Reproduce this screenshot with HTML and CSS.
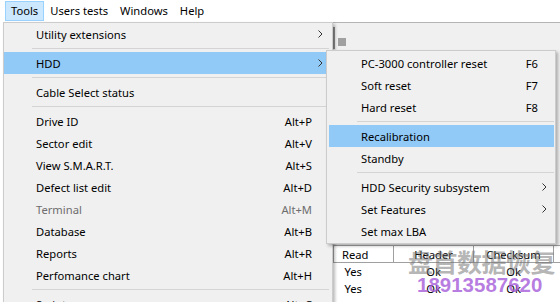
FILE: index.html
```html
<!DOCTYPE html>
<html>
<head>
<meta charset="utf-8">
<link rel="stylesheet" href="styles.css">
</head>
<body>
<div class="menubar">
  <span class="mb-item active">Tools</span>
  <span class="mb-item">Users tests</span>
  <span class="mb-item">Windows</span>
  <span class="mb-item">Help</span>
</div>
<div class="app">
  <div class="left-pane"></div>
  <div class="right-pane">
    <div class="toolbar"><span class="grip"></span><span class="tool-icon"></span></div>
    <table class="grid">
      <colgroup><col class="c1"><col class="c2"><col class="c3"><col></colgroup>
      <thead><tr><th class="left">Read</th><th>Header</th><th>Checksum</th><th></th></tr></thead>
      <tbody>
        <tr><td class="left">Yes</td><td>Ok</td><td>Ok</td><td></td></tr>
        <tr><td class="left">Yes</td><td>Ok</td><td>Ok</td><td></td></tr>
        <tr><td class="left">No</td><td>Ok</td><td>Ok</td><td></td></tr>
      </tbody>
    </table>
  </div>
</div>

<div class="menu main-menu">
  <div class="mi"><span class="label">Utility extensions</span><span class="key"></span><span class="arrow"><svg width="5" height="8" viewBox="0 0 5 8"><path d="M0.5 0.5 L4 4 L0.5 7.5" fill="none" stroke="#333" stroke-width="1"/></svg></span></div>
  <div class="sep"></div>
  <div class="mi hl"><span class="label">HDD</span><span class="key"></span><span class="arrow"><svg width="5" height="8" viewBox="0 0 5 8"><path d="M0.5 0.5 L4 4 L0.5 7.5" fill="none" stroke="#333" stroke-width="1"/></svg></span></div>
  <div class="sep"></div>
  <div class="mi"><span class="label">Cable Select status</span><span class="key"></span><span class="arrow"></span></div>
  <div class="sep"></div>
  <div class="mi"><span class="label">Drive ID</span><span class="key">Alt+P</span><span class="arrow"></span></div>
  <div class="mi"><span class="label">Sector edit</span><span class="key">Alt+V</span><span class="arrow"></span></div>
  <div class="mi"><span class="label">View S.M.A.R.T.</span><span class="key">Alt+S</span><span class="arrow"></span></div>
  <div class="mi"><span class="label">Defect list edit</span><span class="key">Alt+D</span><span class="arrow"></span></div>
  <div class="mi disabled"><span class="label">Terminal</span><span class="key">Alt+M</span><span class="arrow"></span></div>
  <div class="mi"><span class="label">Database</span><span class="key">Alt+B</span><span class="arrow"></span></div>
  <div class="mi"><span class="label">Reports</span><span class="key">Alt+R</span><span class="arrow"></span></div>
  <div class="mi"><span class="label">Perfomance chart</span><span class="key">Alt+H</span><span class="arrow"></span></div>
  <div class="sep"></div>
  <div class="mi"><span class="label">Scripts</span><span class="key">Alt+C</span><span class="arrow"></span></div>
</div>

<div class="menu sub-menu">
  <div class="mi"><span class="label">PC-3000 controller reset</span><span class="key">F6</span><span class="arrow"></span></div>
  <div class="mi"><span class="label">Soft reset</span><span class="key">F7</span><span class="arrow"></span></div>
  <div class="mi"><span class="label">Hard reset</span><span class="key">F8</span><span class="arrow"></span></div>
  <div class="sep"></div>
  <div class="mi hl"><span class="label">Recalibration</span><span class="key"></span><span class="arrow"></span></div>
  <div class="mi"><span class="label">Standby</span><span class="key"></span><span class="arrow"></span></div>
  <div class="sep"></div>
  <div class="mi"><span class="label">HDD Security subsystem</span><span class="key"></span><span class="arrow"><svg width="5" height="8" viewBox="0 0 5 8"><path d="M0.5 0.5 L4 4 L0.5 7.5" fill="none" stroke="#333" stroke-width="1"/></svg></span></div>
  <div class="mi"><span class="label">Set Features</span><span class="key"></span><span class="arrow"><svg width="5" height="8" viewBox="0 0 5 8"><path d="M0.5 0.5 L4 4 L0.5 7.5" fill="none" stroke="#333" stroke-width="1"/></svg></span></div>
  <div class="mi"><span class="label">Set max LBA</span><span class="key"></span><span class="arrow"></span></div>
</div>

<div class="watermark">
  <div class="wm-cn">盘首数据恢复</div>
  <div class="wm-phone">18913587620</div>
</div>
</body>
</html>
```
FILE: styles.css
```css
* { box-sizing: border-box; }
html, body { margin: 0; padding: 0; }
body {
  width: 560px;
  height: 302px;
  overflow: hidden;
  position: relative;
  background: #ffffff;
  font-family: "Noto Sans", "Open Sans", sans-serif;
  font-size: 11px;
  color: #000;
}

.menubar {
  height: 22px;
  display: flex;
  align-items: flex-start;
  padding: 1px 0 0 5px;
  background: #ffffff;
}
.mb-item {
  height: 20px;
  line-height: 18px;
  padding: 0 5px;
  border: 1px solid transparent;
  font-size: 11.2px;
}
.mb-item.active {
  background: #cce8ff;
  border-color: #99d1ff;
}

.app {
  display: grid;
  grid-template-columns: 333px 1fr;
  height: 280px;
}
.left-pane { background: #ffffff; }
.right-pane {
  border-top: 1px solid #b4b4b4;
  background: #f0f0f0;
  display: flex;
  flex-direction: column;
}
.toolbar {
  height: 222px;
  display: flex;
  align-items: flex-start;
  padding: 4px 0 0 0;
  gap: 3px;
}
.grip {
  width: 2px;
  height: 22px;
  background: #8a8a8a;
}
.tool-icon {
  width: 8px;
  height: 8px;
  margin-top: 11px;
  background: #a0a0a0;
}

.grid {
  border-collapse: collapse;
  table-layout: fixed;
  width: 260px;
  background: #ffffff;
  font-size: 11.2px;
}
.grid col.c1 { width: 60px; }
.grid col.c2 { width: 80px; }
.grid col.c3 { width: 80px; }
.grid th {
  font-weight: normal;
  height: 17px;
  padding: 0;
  line-height: 15px;
  text-align: center;
  border: 1px solid #a0a0a0;
  background: #ffffff;
}
.grid td {
  height: 17px;
  padding: 0;
  line-height: 17px;
  text-align: center;
}
.grid th.left { text-align: left; padding-left: 8px; }
.grid td.left { text-align: left; padding-left: 11px; }

.menu {
  position: absolute;
  background: #f0f0f0;
  border: 1px solid #cccccc;
  box-shadow: 2px 2px 3px rgba(0, 0, 0, 0.28);
  font-size: 11.2px;
}
.main-menu {
  left: 3px;
  top: 22px;
  width: 330px;
  padding: 0 3px 0 0;
}
.sub-menu {
  left: 326px;
  top: 50px;
  width: 230px;
  padding: 1px 1px 1px 2px;
}
.mi {
  display: flex;
  align-items: center;
  height: 22px;
  padding-left: 32px;
  white-space: nowrap;
}
.mi .label { flex: 1; }
.mi .key { text-align: right; }
.mi .arrow {
  width: 17px;
  display: flex;
  align-items: center;
  padding-left: 6px;
  height: 8px;
}
.sub-menu .mi .arrow { width: 16px; padding-left: 4px; }
.mi .arrow svg { display: block; }
.mi.hl { background: #91c9f7; }
.mi.disabled { color: #6d6d6d; }
.sep {
  height: 7px;
  display: flex;
  align-items: center;
  margin-left: 28px;
}
.sep::before {
  content: "";
  display: block;
  width: 100%;
  height: 1px;
  background: #d4d4d4;
}

.watermark {
  position: absolute;
  left: 408px;
  top: 246px;
  pointer-events: none;
}
.wm-cn {
  font-family: "Noto Sans CJK SC", sans-serif;
  font-weight: bold;
  font-size: 25px;
  line-height: 30px;
  letter-spacing: -0.5px;
  color: rgba(110, 110, 110, 0.52);
}
.wm-phone {
  font-family: "Liberation Sans", Arial, sans-serif;
  font-weight: bold;
  font-size: 20.5px;
  line-height: 22px;
  margin-left: 9px;
  margin-top: -2px;
  color: rgba(168, 95, 218, 0.82);
}
```
